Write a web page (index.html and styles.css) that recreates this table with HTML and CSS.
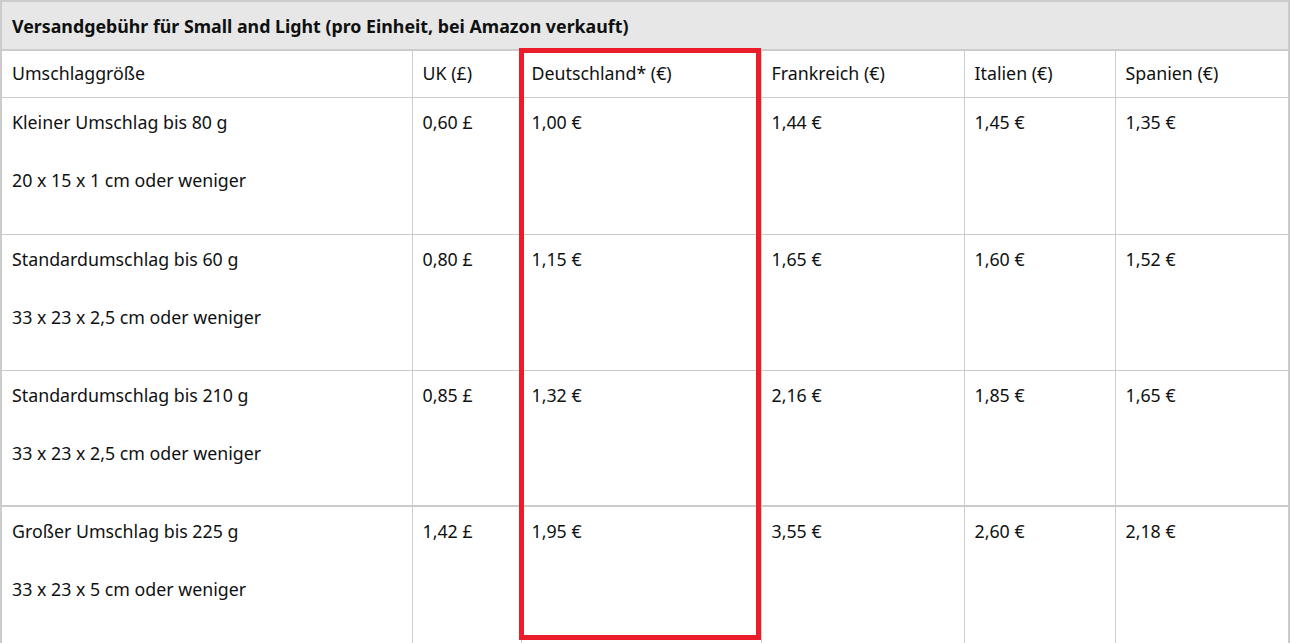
FILE: index.html
```html
<!DOCTYPE html>
<html lang="de">
<head>
<meta charset="utf-8">
<title>Versandgebühr</title>
<link rel="stylesheet" href="styles.css">
</head>
<body>
<div class="wrap">
  <table class="fees">
    <colgroup>
      <col class="c1"><col class="c2"><col class="c3"><col class="c4"><col class="c5"><col class="c6">
    </colgroup>
    <thead>
      <tr class="title"><th colspan="6">Versandgebühr für Small and Light (pro Einheit, bei Amazon verkauft)</th></tr>
    </thead>
    <tbody>
      <tr class="head">
        <td>Umschlaggröße</td><td>UK (£)</td><td>Deutschland* (€)</td><td>Frankreich (€)</td><td>Italien (€)</td><td>Spanien (€)</td>
      </tr>
      <tr class="row first">
        <td><p>Kleiner Umschlag bis 80 g</p><p>20 x 15 x 1 cm oder weniger</p></td>
        <td>0,60 £</td><td>1,00 €</td><td>1,44 €</td><td>1,45 €</td><td>1,35 €</td>
      </tr>
      <tr class="row">
        <td><p>Standardumschlag bis 60 g</p><p>33 x 23 x 2,5 cm oder weniger</p></td>
        <td>0,80 £</td><td>1,15 €</td><td>1,65 €</td><td>1,60 €</td><td>1,52 €</td>
      </tr>
      <tr class="row">
        <td><p>Standardumschlag bis 210 g</p><p>33 x 23 x 2,5 cm oder weniger</p></td>
        <td>0,85 £</td><td>1,32 €</td><td>2,16 €</td><td>1,85 €</td><td>1,65 €</td>
      </tr>
      <tr class="row last">
        <td><p>Großer Umschlag bis 225 g</p><p>33 x 23 x 5 cm oder weniger</p></td>
        <td>1,42 £</td><td>1,95 €</td><td>3,55 €</td><td>2,60 €</td><td>2,18 €</td>
      </tr>
    </tbody>
  </table>
  <div class="highlight"></div>
</div>
</body>
</html>
```

FILE: styles.css
```css
html, body {
  margin: 0;
  padding: 0;
  background: #ffffff;
}
body {
  font-family: "Noto Sans", "Open Sans", "Liberation Sans", sans-serif;
  font-size: 17.8px;
  color: #0f1111;
  overflow: hidden;
}
.wrap {
  position: relative;
  width: 1291px;
  height: 643px;
  overflow: hidden;
}
.fees {
  border-collapse: collapse;
  table-layout: fixed;
  width: 1288px;
  border: 2px solid #cccccc;
}
.c1 { width: 411px; }
.c2 { width: 109px; }
.c3 { width: 240px; }
.c4 { width: 203px; }
.c5 { width: 151px; }
.c6 { width: 174px; }
.fees th, .fees td {
  border: 1px solid #cccccc;
  text-align: left;
  vertical-align: top;
  line-height: 24px;
  padding: 0 10px;
}
.title th {
  background: #e7e7e7;
  font-weight: 700;
  height: 49px;
  padding-top: 12px;
  box-sizing: border-box;
  border-bottom: 2px solid #cccccc;
}
.head td {
  height: 47px;
  padding-top: 10px;
  box-sizing: border-box;
}
.row td {
  height: 136px;
  padding-top: 12px;
  box-sizing: border-box;
}
.row.first td {
  height: 137px;
}
.row.last td {
  border-top: 2px solid #cccccc;
  height: 160px;
}
.row p {
  margin: 0 0 34px 0;
}
.highlight {
  position: absolute;
  left: 519px;
  top: 48px;
  width: 242px;
  height: 592px;
  box-sizing: border-box;
  border: 5px solid #ec1c2a;
}
```
